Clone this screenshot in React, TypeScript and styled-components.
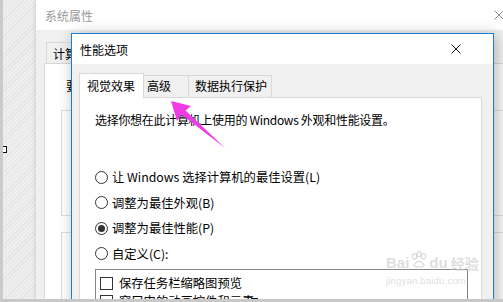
import React from "react";
import styled, { createGlobalStyle } from "styled-components";

const GlobalStyle = createGlobalStyle`
  html, body {
    margin: 0;
    padding: 0;
    overflow: hidden;
  }
  body {
    font-family: "Noto Sans CJK SC", "Noto Sans", sans-serif;
    color: #000;
  }
`;

const Desktop = styled.div`
  position: relative;
  width: 503px;
  height: 302px;
  overflow: hidden;
  background: repeating-linear-gradient(
      135deg,
      #efefef 0px,
      #efefef 2px,
      #e4e4e4 2px,
      #e4e4e4 3px
    );
  border-left: 3px solid #cbcbcb;
  box-sizing: border-box;
`;

const Handle = styled.div`
  position: absolute;
  width: 5px;
  height: 5px;
  border: 1px solid #111;
  background: #fff;
`;

/* ---------- back window: 系统属性 ---------- */

const BackWindow = styled.div`
  position: absolute;
  left: 33px;
  top: 0;
  width: 480px;
  height: 299px;
  display: flex;
  flex-direction: column;
  background: #f0f0f0;
  box-shadow: -1px 0 4px rgba(0, 0, 0, 0.12);
`;

const BackTitle = styled.div`
  height: 30px;
  flex-shrink: 0;
  background: #fff;
  display: flex;
  align-items: center;
  justify-content: space-between;
  padding: 0 12px 0 9px;
  font-size: 12px;
  color: #9a9a9a;
`;

const BackBody = styled.div`
  flex: 1;
  display: flex;
  flex-direction: column;
  padding: 12px 0 0 8px;
`;

const BackTab = styled.div`
  align-self: flex-start;
  box-sizing: border-box;
  width: 26px;
  margin-left: 2px;
  height: 21px;
  padding-left: 6px;
  overflow: hidden;
  white-space: nowrap;
  border: 1px solid #d9d9d9;
  border-bottom: none;
  border-right: none;
  background: #f0f0f0;
  font-size: 12px;
  line-height: 21px;
`;

const BackPanel = styled.div`
  flex: 1;
  border: 1px solid #d9d9d9;
  background: linear-gradient(90deg, #ffffff, #f8f8f8);
  padding: 14px 0 0 16px;
  display: flex;
  flex-direction: column;
  gap: 16px;
  font-size: 12px;
`;

const BackLabel = styled.div`
  padding-left: 5px;
  line-height: 16px;
`;

const GroupBox = styled.div<{ $h: number }>`
  height: ${({ $h }) => $h}px;
  border: 1px solid #dcdcdc;
`;

/* ---------- front dialog: 性能选项 ---------- */

const Dialog = styled.div`
  position: absolute;
  left: 68px;
  top: 33px;
  width: 421px;
  height: 280px;
  display: flex;
  flex-direction: column;
  border: 1px solid #1a7fd4;
  background: #f0f0f0;
  box-shadow: 2px 2px 14px rgba(0, 0, 0, 0.28);
`;

const TitleBar = styled.div`
  height: 30px;
  flex-shrink: 0;
  background: #fff;
  display: flex;
  align-items: center;
  justify-content: space-between;
  padding: 0 32px 0 8px;
  font-size: 12px;
`;

const DialogBody = styled.div`
  flex: 1;
  display: flex;
  flex-direction: column;
  padding: 9px 10px 0 7px;
`;

const TabRow = styled.div`
  display: flex;
  align-items: flex-end;
  height: 24px;
  position: relative;
  z-index: 1;
`;

const Tab = styled.div<{ $active?: boolean; $w: number; $pl: number }>`
  box-sizing: border-box;
  width: ${({ $w }) => $w}px;
  height: ${({ $active }) => ($active ? 25 : 22)}px;
  margin-bottom: ${({ $active }) => ($active ? -1 : 0)}px;
  margin-right: -1px;
  padding-left: ${({ $pl }) => $pl}px;
  border: 1px solid #d9d9d9;
  border-bottom: none;
  background: ${({ $active }) => ($active ? "#fff" : "#f0f0f0")};
  font-size: 12px;
  line-height: ${({ $active }) => ($active ? 23 : 20)}px;
  white-space: nowrap;
`;

const Panel = styled.div`
  flex: 1;
  width: 403px;
  box-sizing: border-box;
  border: 1px solid #d9d9d9;
  background: #fff;
  padding: 14px 0 0 15px;
  display: flex;
  flex-direction: column;
`;

const Intro = styled.div`
  font-size: 12px;
  line-height: 16px;
  white-space: nowrap;
  letter-spacing: -0.3px;
`;

const RadioList = styled.div`
  margin-top: 41px;
  display: flex;
  flex-direction: column;
  gap: 9.6px;
`;

const Option = styled.label`
  display: flex;
  align-items: center;
  gap: 4px;
  height: 16px;
  font-size: 12.3px;
  white-space: nowrap;
`;

const Radio = styled.span<{ $checked?: boolean }>`
  box-sizing: border-box;
  width: 13px;
  height: 13px;
  border-radius: 50%;
  border: 1px solid #333;
  display: flex;
  align-items: center;
  justify-content: center;
  &::after {
    content: "";
    width: 7px;
    height: 7px;
    border-radius: 50%;
    background: ${({ $checked }) => ($checked ? "#333" : "transparent")};
  }
`;

const CheckList = styled.div`
  margin-top: 7px;
  width: 373px;
  flex: 1;
  box-sizing: border-box;
  border: 1px solid #828790;
  border-bottom: none;
  padding: 7px 0 0 4px;
  display: flex;
  flex-direction: column;
  gap: 5px;
`;

const CheckItem = styled.div`
  display: flex;
  align-items: center;
  gap: 6px;
  height: 13px;
  font-size: 12.3px;
  white-space: nowrap;
`;

const CheckBox = styled.span`
  box-sizing: border-box;
  width: 13px;
  height: 13px;
  border: 1px solid #333;
  background: #fff;
`;

const BottomBar = styled.div`
  position: absolute;
  left: 0;
  right: 0;
  bottom: 0;
  height: 3px;
  background: #c8c8c8;
`;

const Watermark = styled.div`
  position: absolute;
  left: 383px;
  top: 254px;
  display: flex;
  flex-direction: column;
  align-items: flex-start;
  color: rgba(200, 200, 200, 0.6);
  font-family: "Liberation Sans", sans-serif;
  pointer-events: none;
`;

const MarkTop = styled.div`
  display: flex;
  align-items: center;
  font-size: 15px;
  font-weight: bold;
  line-height: 18px;
`;

const MarkCjk = styled.span`
  font-family: "Noto Sans CJK SC", sans-serif;
  font-size: 14px;
  margin-left: 3px;
`;

const MarkSub = styled.div`
  font-size: 9.5px;
  line-height: 12px;
  margin-top: 3px;
  letter-spacing: 0.2px;
`;

const Arrow = styled.svg`
  position: absolute;
  left: 0;
  top: 0;
  pointer-events: none;
`;

const CloseIcon = ({ color, size }: { color: string; size: number }) => (
  <svg width={size} height={size} viewBox="0 0 10 10">
    <path d="M0.5 0.5 L9.5 9.5 M9.5 0.5 L0.5 9.5" stroke={color} strokeWidth="1" />
  </svg>
);

const Paw = () => (
  <svg width="20" height="18" viewBox="0 0 22 20" style={{ margin: "-6px 0 0 0" }}>
    <g fill="none" stroke="rgba(200,200,200,0.65)" strokeWidth="1.3">
      <ellipse cx="6" cy="6" rx="2.4" ry="3" />
      <ellipse cx="11" cy="3.5" rx="2.2" ry="2.8" />
      <ellipse cx="16" cy="6" rx="2.4" ry="3" />
      <path d="M5 16 Q11 7 17 16 Q11 20 5 16 Z" />
    </g>
  </svg>
);

export default function App() {
  return (
    <>
      <GlobalStyle />
      <Desktop>
        <BackWindow>
          <BackTitle>
            <span>系统属性</span>
            <CloseIcon color="#8f8f8f" size={10} />
          </BackTitle>
          <BackBody>
            <BackTab>计算</BackTab>
            <BackPanel>
              <BackLabel>要</BackLabel>
              <GroupBox $h={104} />
              <GroupBox $h={80} />
            </BackPanel>
          </BackBody>
        </BackWindow>

        <Dialog>
          <TitleBar>
            <span>性能选项</span>
            <CloseIcon color="#111" size={10} />
          </TitleBar>
          <DialogBody>
            <TabRow>
              <Tab $active $w={65} $pl={7}>
                视觉效果
              </Tab>
              <Tab $w={46} $pl={3}>
                高级
              </Tab>
              <Tab $w={84} $pl={6}>
                数据执行保护
              </Tab>
            </TabRow>
            <Panel>
              <Intro>选择你想在此计算机上使用的 Windows 外观和性能设置。</Intro>
              <RadioList>
                <Option>
                  <Radio />让 Windows 选择计算机的最佳设置(L)
                </Option>
                <Option>
                  <Radio />调整为最佳外观(B)
                </Option>
                <Option>
                  <Radio $checked />调整为最佳性能(P)
                </Option>
                <Option>
                  <Radio />自定义(C):
                </Option>
              </RadioList>
              <CheckList>
                <CheckItem>
                  <CheckBox />保存任务栏缩略图预览
                </CheckItem>
                <CheckItem>
                  <CheckBox />窗口中的动画控件和元素
                </CheckItem>
              </CheckList>
            </Panel>
          </DialogBody>
        </Dialog>

        <Watermark>
          <MarkTop>
            Bai
            <Paw />
            du
            <MarkCjk>经验</MarkCjk>
          </MarkTop>
          <MarkSub>jingyan.baidu.com</MarkSub>
        </Watermark>

        <Arrow width="503" height="302" viewBox="0 0 503 302">
          <path d="M168 101 L188 106 L182.5 110.5 L222 148 L178.5 114.5 L174 121 Z" fill="#f03ae6" />
        </Arrow>

        <Handle style={{ left: -3, top: 146 }} />
        <Handle style={{ left: 248, top: 298 }} />
        <BottomBar />
      </Desktop>
    </>
  );
}
